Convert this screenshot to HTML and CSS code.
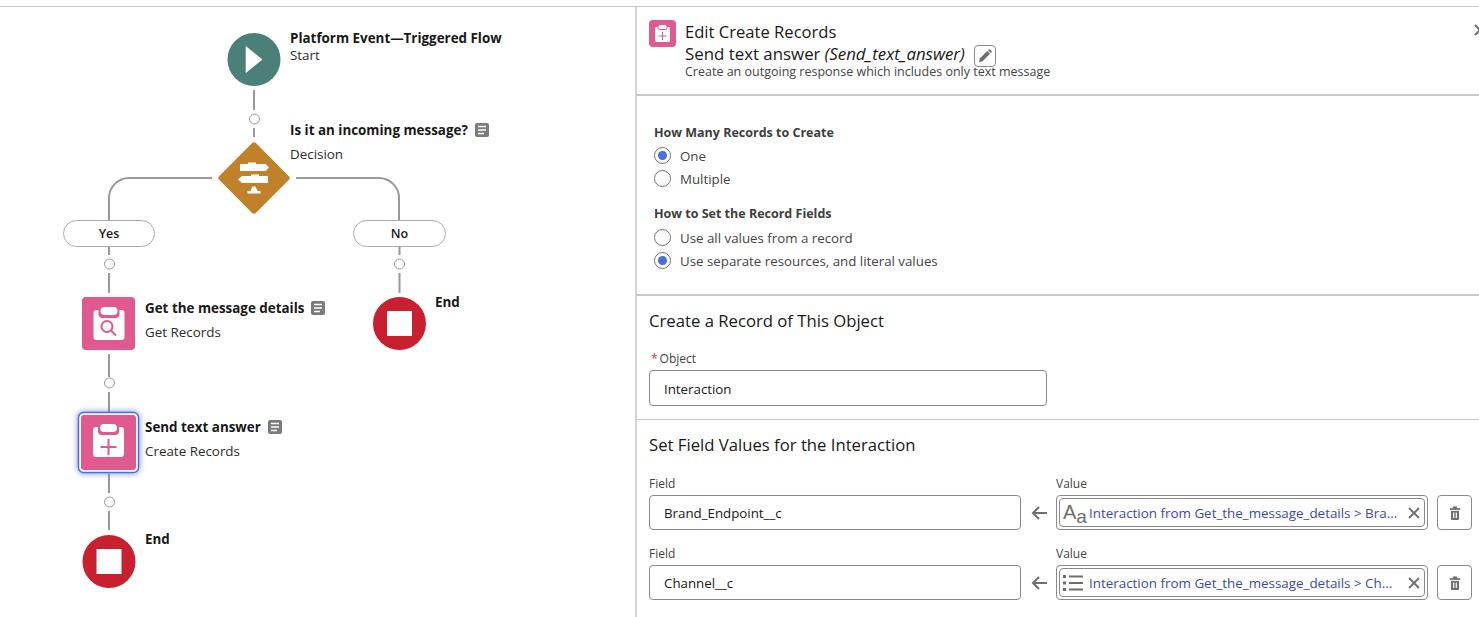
FILE: index.html
```html
<!DOCTYPE html>
<html lang="en">
<head>
<meta charset="UTF-8">
<title>Edit Create Records</title>
<link rel="stylesheet" href="styles.css">
</head>
<body>

<svg class="defs" width="0" height="0">
    <symbol id="note" viewBox="0 0 14 14">
        <rect width="14" height="14" rx="2" fill="#7b7b7b"/>
        <path d="M3 3.500h8M3 7h8M3 10.500h6" stroke="#fff" stroke-width="1.600" fill="none"/>
    </symbol>
    <symbol id="clip" viewBox="0 0 54 54">
        <rect x="11.500" y="13" width="31" height="30" rx="3" fill="#fff"/>
        <rect x="16.500" y="8" width="21" height="13" rx="4" fill="#e0598f"/>
        <rect x="18.500" y="10" width="17" height="8" rx="4" fill="#fff"/>
    </symbol>
    <symbol id="trash" viewBox="0 0 14 14">
        <path d="M2 2.500h10v1.200H2zM5.200 2.500V.8h3.600v1.700" fill="#706e6b" stroke="#706e6b" stroke-width=".6"/>
        <path d="M3 5h8v8a1 1 0 0 1-1 1H4a1 1 0 0 1-1-1z" fill="#706e6b"/>
        <path d="M5.700 6.500v5.500M8.300 6.500v5.500" stroke="#fff" stroke-width="1.200"/>
    </symbol>
</svg>

<div class="page">
    <div class="canvas">
        <svg class="graph" width="635" height="610" viewBox="0 0 635 610">
            <!-- page top is 7px above this svg -->
            <g transform="translate(0,-7)" fill="none" stroke="#999" stroke-width="2">
                <path d="M254 90v20M254 128v9"/>
                <path d="M212 178h-83a20 20 0 0 0-20 20v22"/>
                <path d="M296 178h83a20 20 0 0 1 20 20v22"/>
                <path d="M109 246v9M109 273v20M109 354v23M109 392v20M109 474v19M109 511v19"/>
                <path d="M399.500 246v9M399.500 273v20"/>
                <g stroke-width="1">
                    <circle cx="254.500" cy="119" r="5" fill="#fff"/>
                    <circle cx="109.500" cy="264" r="5" fill="#fff"/>
                    <circle cx="399.500" cy="264" r="5" fill="#fff"/>
                    <circle cx="109.500" cy="383" r="5" fill="#fff"/>
                    <circle cx="109.500" cy="502" r="5" fill="#fff"/>
                </g>
            </g>
            <g transform="translate(0,-7)">
                <circle cx="254" cy="59.500" r="26.500" fill="#4b8078"/>
                <path d="M246 46.500l16 13-16 13z" fill="#fff" stroke="#fff" stroke-width=".6" stroke-linejoin="round"/>

                <rect x="228" y="152" width="52" height="52" rx="3" transform="rotate(45 254 178)" fill="#c1812b"/>
                <path d="M240 164h8v-1.500h8v1.500h9.500l3.500 3.500-3.500 3.500H240zM268 176h-9v-1.500h-8v1.500h-9l-4 3.500 4 3.500h26z" fill="#fff"/>
                <path d="M252.500 186.500h3l2 4.500h3v2.500h-13v-2.500h3z" fill="#fff"/>

                <rect x="82" y="297" width="53" height="53" rx="4" fill="#e0598f"/>
                <use href="#clip" x="82" y="297" width="54" height="54"/>
                <circle cx="107" cy="326.500" r="5.500" fill="none" stroke="#e0598f" stroke-width="2"/>
                <path d="M111 330.500l5 5" stroke="#e0598f" stroke-width="2"/>

                <rect x="78.500" y="412.500" width="60" height="60" rx="5" fill="#fff" stroke="#4a6fd8" stroke-width="1.400" class="selected"/>
                <rect x="81" y="415" width="55" height="55" rx="3" fill="#e0598f"/>
                <use href="#clip" x="81.500" y="414" width="54" height="54"/>
                <path d="M108.500 439v16M100.500 447h16" stroke="#e0598f" stroke-width="2"/>

                <circle cx="109" cy="561.500" r="26.500" fill="#c9202f"/>
                <rect x="96.500" y="549" width="25" height="25" fill="#fff"/>
                <circle cx="399.500" cy="323.500" r="26.500" fill="#c9202f"/>
                <rect x="387" y="311" width="25" height="25" fill="#fff"/>
            </g>
        </svg>

        <div class="pill pill-yes">Yes</div>
        <div class="pill pill-no">No</div>

        <div class="node node-start">
            <div class="node-title">Platform Event—Triggered Flow</div>
            <div class="node-type tight">Start</div>
        </div>
        <div class="node node-decision">
            <div class="node-title">Is it an incoming message? <svg class="note"><use href="#note"/></svg></div>
            <div class="node-type">Decision</div>
        </div>
        <div class="node node-get">
            <div class="node-title">Get the message details <svg class="note"><use href="#note"/></svg></div>
            <div class="node-type">Get Records</div>
        </div>
        <div class="node node-send">
            <div class="node-title">Send text answer <svg class="note"><use href="#note"/></svg></div>
            <div class="node-type">Create Records</div>
        </div>
        <div class="node node-end1"><div class="node-title">End</div></div>
        <div class="node node-end2"><div class="node-title">End</div></div>
    </div>

    <div class="panel">
        <div class="panel-header">
            <svg class="header-icon" viewBox="0 0 27 27">
                <rect width="27" height="27" rx="4" fill="#e0598f"/>
                <rect x="6" y="7" width="15" height="15" rx="1.500" fill="#fff"/>
                <rect x="9" y="4.500" width="9" height="5" rx="2" fill="#fff" stroke="#e0598f"/>
                <path d="M13.500 12v8M9.500 16h8" stroke="#e0598f"/>
            </svg>
            <div class="header-text">
                <div class="header-title">Edit Create Records</div>
                <div class="header-name">Send text answer <em>(Send_text_answer)</em>
                    <span class="icon-btn pencil">
                        <svg viewBox="0 0 14 14" width="14" height="14"><path d="M1 13l.8-3.600 7.400-7.400 2.800 2.800-7.400 7.400zM10 1.200l.8-.7a1 1 0 0 1 1.300 0l1.400 1.400a1 1 0 0 1 0 1.300l-.7.800z" fill="#706e6b"/></svg>
                    </span>
                </div>
                <div class="header-desc">Create an outgoing response which includes only text message</div>
            </div>
            <svg class="close" viewBox="0 0 12 12" width="12" height="12"><path d="M1 1l10 10M11 1L1 11" stroke="#706e6b" stroke-width="2"/></svg>
        </div>

        <div class="section options">
            <div class="opt-title">How Many Records to Create</div>
            <div class="radio"><span class="dot on"></span>One</div>
            <div class="radio"><span class="dot"></span>Multiple</div>
            <div class="opt-title second">How to Set the Record Fields</div>
            <div class="radio"><span class="dot"></span>Use all values from a record</div>
            <div class="radio"><span class="dot on"></span>Use separate resources, and literal values</div>
        </div>

        <div class="section object">
            <h2>Create a Record of This Object</h2>
            <label class="small-label"><span class="req">*</span>Object</label>
            <div class="input object-input">Interaction</div>
        </div>

        <div class="section fields">
            <h2>Set Field Values for the Interaction</h2>

            <div class="field-row">
                <div class="col-field">
                    <label class="small-label">Field</label>
                    <div class="input">Brand_Endpoint__c</div>
                </div>
                <svg class="arrow" viewBox="0 0 16 14" width="16" height="14"><path d="M16 7H2M8 1L2 7l6 6" fill="none" stroke="#706e6b" stroke-width="2"/></svg>
                <div class="col-value">
                    <label class="small-label">Value</label>
                    <div class="value-box">
                        <div class="value-pill">
                            <span class="aa">A<small>a</small></span>
                            <span class="value-text">Interaction from Get_the_message_details &gt; Bra...</span>
                            <svg class="clear" viewBox="0 0 12 12" width="12" height="12"><path d="M1 1l10 10M11 1L1 11" stroke="#706e6b" stroke-width="1.800"/></svg>
                        </div>
                    </div>
                </div>
                <div class="icon-btn trash"><svg width="14" height="14"><use href="#trash"/></svg></div>
            </div>

            <div class="field-row">
                <div class="col-field">
                    <label class="small-label">Field</label>
                    <div class="input">Channel__c</div>
                </div>
                <svg class="arrow" viewBox="0 0 16 14" width="16" height="14"><path d="M16 7H2M8 1L2 7l6 6" fill="none" stroke="#706e6b" stroke-width="2"/></svg>
                <div class="col-value">
                    <label class="small-label">Value</label>
                    <div class="value-box">
                        <div class="value-pill">
                            <svg class="list-icon" viewBox="0 0 20 18" width="20" height="18"><path d="M6 2.500h14M6 9h14M6 15.500h14" stroke="#706e6b" stroke-width="2"/><path d="M0 1h3v3H0zM0 7.500h3v3H0zM0 14h3v3H0z" fill="#706e6b"/></svg>
                            <span class="value-text">Interaction from Get_the_message_details &gt; Ch...</span>
                            <svg class="clear" viewBox="0 0 12 12" width="12" height="12"><path d="M1 1l10 10M11 1L1 11" stroke="#706e6b" stroke-width="1.800"/></svg>
                        </div>
                    </div>
                </div>
                <div class="icon-btn trash"><svg width="14" height="14"><use href="#trash"/></svg></div>
            </div>
        </div>
    </div>
</div>

</body>
</html>
```

FILE: styles.css
```css
html, body {
    margin: 0;
    padding: 0;
    height: 100%;
    overflow: hidden;
    background-color: #fff;
}

body {
    font-family: "Open Sans", "Liberation Sans", sans-serif;
    font-size: 13px;
    color: #181818;
}

.defs {
    position: absolute;
}

.page {
    display: flex;
    height: 610px;
    margin-top: 6px;
    border-top: 1px solid #c9c9c9;
}

/* flow diagram */
.canvas {
    position: relative;
    width: 635px;
    flex: none;
}

.graph {
    position: absolute;
    left: 0;
    top: 0;
}

.selected {
    filter: drop-shadow(0 0 3px rgba(74, 111, 216, 0.8));
}

.pill {
    position: absolute;
    box-sizing: border-box;
    height: 27px;
    line-height: 26px;
    background-color: #fff;
    border: 1px solid #aaa;
    border-radius: 14px;
    text-align: center;
    font-size: 12.5px;
    font-weight: 600;
}

.pill-yes { left: 63px; top: 213px; width: 92px; }
.pill-no { left: 353px; top: 213px; width: 93px; }

.node {
    position: absolute;
}

.node-title {
    display: flex;
    align-items: center;
    gap: 7px;
    font-size: 13.4px;
    font-weight: 700;
    line-height: 16px;
    white-space: nowrap;
}

.node-type {
    margin-top: 8px;
    font-size: 13.4px;
    line-height: 16px;
    color: #2b2b2b;
}

.node-type.tight {
    margin-top: 1px;
}

.note {
    width: 14px;
    height: 14px;
}

.node-start { left: 290px; top: 23px; }
.node-decision { left: 290px; top: 115px; }
.node-get { left: 145px; top: 293px; }
.node-send { left: 145px; top: 412px; }
.node-end1 { left: 435px; top: 287px; }
.node-end2 { left: 145px; top: 524px; }

/* edit panel */
.panel {
    flex: 1;
    min-width: 0;
    overflow: hidden;
    border-left: 2px solid #d4d4d4;
}

.panel-header {
    display: flex;
    align-items: flex-start;
    gap: 9px;
    height: 89px;
    padding: 13px 0 0 12px;
    box-sizing: border-box;
    border-bottom: 2px solid #c9c9c9;
}

.header-icon {
    width: 27px;
    height: 27px;
    flex: none;
}

.header-text {
    flex: 1;
    margin-top: 2px;
}

.header-title {
    font-size: 16.6px;
    line-height: 19px;
}

.header-name {
    display: flex;
    align-items: center;
    gap: 4px;
    font-size: 16.85px;
    line-height: 22px;
}

.header-name em {
    margin-right: 5px;
}

.header-desc {
    margin-top: -3px;
    font-size: 12.5px;
    line-height: 16px;
    color: #444;
}

.close {
    flex: none;
    margin: 4px -7px 0 0;
}

.icon-btn {
    display: flex;
    align-items: center;
    justify-content: center;
    box-sizing: border-box;
    border: 1px solid #8a8a8a;
    border-radius: 4px;
    background-color: #fff;
    flex: none;
}

.pencil {
    width: 22px;
    height: 22px;
    margin-top: 4px;
}

.section {
    box-sizing: border-box;
    padding-left: 12px;
}

.options {
    height: 200px;
    padding: 28px 0 0 17px;
    border-bottom: 2px solid #c9c9c9;
}

.opt-title {
    font-size: 12.5px;
    font-weight: 700;
    line-height: 18px;
    color: #3e3e3c;
    margin-bottom: 2px;
}

.opt-title.second {
    margin-top: 15px;
    margin-bottom: 3px;
}

.radio {
    display: flex;
    align-items: center;
    gap: 9px;
    height: 23px;
    font-size: 13.3px;
    color: #444;
}

.dot {
    position: relative;
    box-sizing: border-box;
    width: 17px;
    height: 17px;
    border: 1px solid #747474;
    border-radius: 50%;
    background-color: #fff;
    flex: none;
}

.dot.on::after {
    content: "";
    position: absolute;
    left: 3px;
    top: 3px;
    width: 9px;
    height: 9px;
    border-radius: 50%;
    background-color: #4a6fd8;
}

.object {
    height: 124px;
    padding-top: 13px;
    border-bottom: 1px solid #c9c9c9;
}

h2 {
    margin: 0;
    font-size: 16.7px;
    font-weight: 400;
    line-height: 24px;
}

.small-label {
    display: block;
    font-size: 12px;
    line-height: 16px;
    color: #444;
}

.req {
    color: #c23934;
    margin: 0 2px 0 2px;
}

.object .small-label {
    margin-top: 18px;
    margin-bottom: 3px;
}

.input {
    box-sizing: border-box;
    height: 35px;
    line-height: 34px;
    padding-left: 14px;
    border: 1px solid #8a8a8a;
    border-radius: 4px;
    font-size: 13.3px;
    color: #181818;
}

.object-input {
    width: 398px;
    height: 36px;
    line-height: 36px;
}

.fields {
    padding-top: 13px;
}

.field-row {
    display: flex;
    align-items: flex-end;
    margin-top: 22px;
    height: 51px;
}

.field-row + .field-row {
    margin-top: 19px;
}

.col-field {
    width: 372px;
    flex: none;
}

.col-field .small-label, .col-value .small-label {
    margin-bottom: 3px;
}

.arrow {
    flex: none;
    margin: 0 9px 10px 10px;
}

.col-value {
    width: 372px;
    flex: none;
}

.value-box {
    box-sizing: border-box;
    height: 35px;
    padding: 2px;
    border: 1px solid #8a8a8a;
    border-radius: 4px;
}

.value-pill {
    display: flex;
    align-items: center;
    box-sizing: border-box;
    height: 29px;
    padding: 0 4px 0 3px;
    border: 1px solid #8a8a8a;
    border-radius: 4px;
}

.aa {
    width: 26px;
    height: 22px;
    font-family: "Liberation Sans", sans-serif;
    font-size: 20px;
    line-height: 20px;
    color: #706e6b;
    flex: none;
}

.aa small {
    font-size: 19px;
    vertical-align: -4px;
}

.list-icon {
    flex: none;
    margin-right: 6px;
}

.value-text {
    flex: 1;
    font-size: 13.4px;
    color: #3a4aa8;
    white-space: nowrap;
}

.clear {
    flex: none;
}

.trash {
    width: 35px;
    height: 35px;
    margin-left: 9px;
}
```
